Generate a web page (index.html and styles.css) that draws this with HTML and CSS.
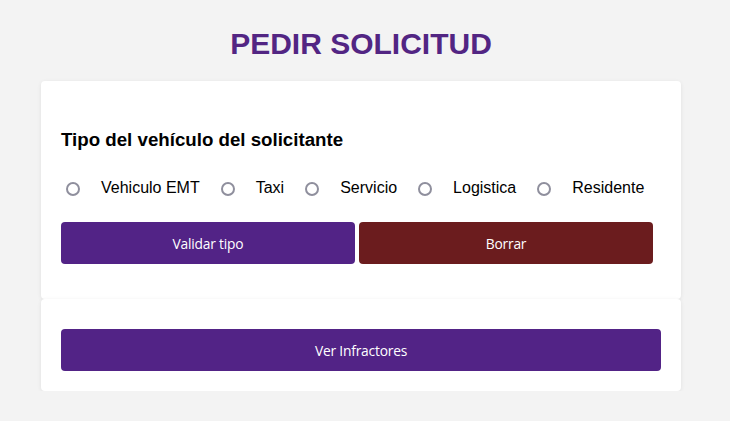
FILE: index.html
```html
<!DOCTYPE html>
<html lang="es">
<head>
<meta charset="utf-8">
<title>Pedir solicitud</title>
<link rel="stylesheet" href="styles.css">
</head>
<body>
<main class="page">
  <h1 class="title">PEDIR SOLICITUD</h1>
  <section class="card card-form">
    <h2 class="card-heading">Tipo del vehículo del solicitante</h2>
    <div class="options">
      <label class="option"><input type="radio" name="tipo" class="radio"><span>Vehiculo EMT</span></label>
      <label class="option"><input type="radio" name="tipo" class="radio"><span>Taxi</span></label>
      <label class="option"><input type="radio" name="tipo" class="radio"><span>Servicio</span></label>
      <label class="option"><input type="radio" name="tipo" class="radio"><span>Logistica</span></label>
      <label class="option"><input type="radio" name="tipo" class="radio"><span>Residente</span></label>
    </div>
    <div class="actions">
      <button class="btn btn-primary btn-half">Validar tipo</button>
      <button class="btn btn-danger btn-half">Borrar</button>
    </div>
  </section>
  <section class="card card-list">
    <button class="btn btn-primary btn-full">Ver Infractores</button>
  </section>
</main>
</body>
</html>
```
FILE: styles.css
```css
* { box-sizing: border-box; }
html, body { margin: 0; padding: 0; }
body {
  background: #f3f3f3;
  font-family: "Liberation Sans", Arial, sans-serif;
  color: #000;
}
.page {
  width: 640px;
  margin: 0 0 0 41px;
  padding-top: 27px;
}
.title {
  margin: 0 0 20px;
  text-align: center;
  font-size: 30px;
  line-height: 34px;
  font-weight: 700;
  color: #522583;
}
.card {
  background: #fff;
  border-radius: 4px;
  box-shadow: 0 1px 4px rgba(0,0,0,0.08);
  padding: 0 20px;
}
.card-form {
  padding-top: 48px;
  padding-bottom: 35px;
}
.card-heading {
  margin: 0 0 27px;
  font-size: 18.7px;
  line-height: 22px;
  font-weight: 700;
}
.options {
  display: flex;
  align-items: center;
  height: 20px;
  font-size: 16px;
}
.option {
  display: flex;
  align-items: center;
  margin-right: 16px;
}
.radio {
  appearance: none;
  -webkit-appearance: none;
  width: 14px;
  height: 14px;
  margin: 1px 21px 0 5px;
  border: 2px solid #8f8f9d;
  border-radius: 50%;
  background: #fff;
}
.actions {
  display: flex;
  gap: 4px;
  margin-top: 24px;
}
.btn {
  height: 42px;
  border: none;
  border-radius: 4px;
  color: #fff;
  font-family: "Open Sans", sans-serif;
  font-size: 13.8px;
  letter-spacing: -0.2px;
  cursor: pointer;
}
.btn-half { width: 294px; }
.btn-full { width: 100%; display: block; }
.btn-primary { background: #522386; }
.btn-danger { background: #6b1c1e; }
.card-list {
  padding-top: 30px;
  padding-bottom: 20px;
}
```
